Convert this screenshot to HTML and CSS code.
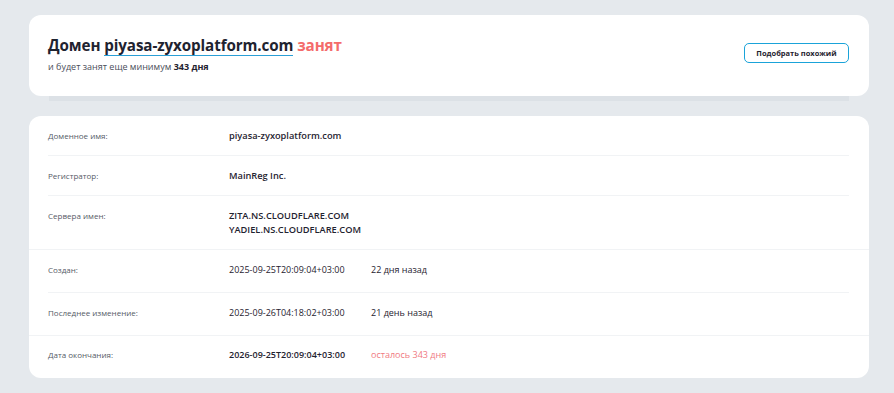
FILE: index.html
```html
<!DOCTYPE html>
<html lang="ru">
<head>
    <meta charset="UTF-8">
    <meta name="viewport" content="width=device-width, initial-scale=1.0">
    <title>Домен piyasa-zyxoplatform.com занят</title>
    <link rel="stylesheet" href="styles.css">
</head>
<body>
    <div class="page">
        <div class="status-card">
            <div class="status-text">
                <h1 class="status-title">Домен <a class="domain-link" href="#">piyasa-zyxoplatform.com</a> <span class="busy">занят</span></h1>
                <p class="status-sub">и будет занят еще минимум <b>343 дня</b></p>
            </div>
            <button class="similar-button">Подобрать похожий</button>
        </div>

        <div class="info-card">
            <div class="info-group">
                <div class="info-row">
                    <div class="info-label">Доменное имя:</div>
                    <div class="info-value bold">piyasa-zyxoplatform.com</div>
                </div>
                <div class="info-row">
                    <div class="info-label">Регистратор:</div>
                    <div class="info-value bold">MainReg Inc.</div>
                </div>
                <div class="info-row">
                    <div class="info-label">Сервера имен:</div>
                    <div class="info-value bold">ZITA.NS.CLOUDFLARE.COM<br>YADIEL.NS.CLOUDFLARE.COM</div>
                </div>
            </div>
            <div class="info-group">
                <div class="info-row wide">
                    <div class="info-label">Создан:</div>
                    <div class="info-value">2025-09-25T20:09:04+03:00</div>
                    <div class="info-extra">22 дня назад</div>
                </div>
                <div class="info-row wide">
                    <div class="info-label">Последнее изменение:</div>
                    <div class="info-value">2025-09-26T04:18:02+03:00</div>
                    <div class="info-extra">21 день назад</div>
                </div>
            </div>
            <div class="info-group">
                <div class="info-row wide">
                    <div class="info-label">Дата окончания:</div>
                    <div class="info-value bold">2026-09-25T20:09:04+03:00</div>
                    <div class="info-extra left">осталось 343 дня</div>
                </div>
            </div>
        </div>
    </div>
</body>
</html>
```

FILE: styles.css
```css
body, html {
    margin: 0;
    padding: 0;
    background-color: #e5e9ed;
    font-family: "Open Sans", Arial, sans-serif;
    color: #1f2330;
}
.page {
    padding: 15px 25px 15px 29px;
}
.status-card {
    display: flex;
    align-items: center;
    justify-content: space-between;
    background-color: #fff;
    border-radius: 12px;
    padding: 19px 20px 22px 19px;
    box-shadow: 0 25px 0 -20px #dce1e6;
}
.status-title {
    margin: 0;
    font-size: 15.2px;
    line-height: 22px;
    font-weight: 700;
    letter-spacing: -0.1px;
}
.domain-link {
    color: inherit;
    text-decoration: none;
    border-bottom: 1px solid #2a9fd6;
}
.busy {
    color: #f46b6b;
}
.status-sub {
    margin: 4px 0 0;
    font-size: 9px;
    line-height: 14px;
    color: #4a4e5a;
}
.status-sub b {
    color: #1f2330;
}
.similar-button {
    width: 105px;
    height: 20px;
    margin-top: -2px;
    background-color: #fff;
    border: 1px solid #1aa3d9;
    border-radius: 5px;
    font-family: inherit;
    font-size: 7.5px;
    font-weight: 700;
    color: #1f2330;
    cursor: pointer;
    padding: 0;
}
.info-card {
    margin-top: 20px;
    background-color: #fff;
    border-radius: 12px;
}
.info-group {
    padding: 0 20px 0 19px;
    border-bottom: 1px solid #f1f3f5;
}
.info-group:last-child {
    border-bottom: none;
}
.info-row {
    display: flex;
    align-items: flex-start;
    padding: 13px 0 12px;
    border-bottom: 1px solid #f1f3f5;
    font-size: 9px;
    line-height: 14px;
}
.info-row.wide {
    padding: 13px 0 15px;
}
.info-row:last-child {
    border-bottom: none;
}
.info-group:last-child .info-row {
    padding: 12px 0 16px;
}
.info-label {
    width: 181px;
    flex-shrink: 0;
    font-size: 8px;
    color: #555a66;
}
.info-value {
    width: 142px;
    flex-shrink: 0;
}
.info-group:first-child .info-value {
    font-size: 9.25px;
}
.bold {
    font-weight: 600;
}
.info-extra {
    color: #1f2330;
}
.info-extra.left {
    color: #f07a7f;
}
```
